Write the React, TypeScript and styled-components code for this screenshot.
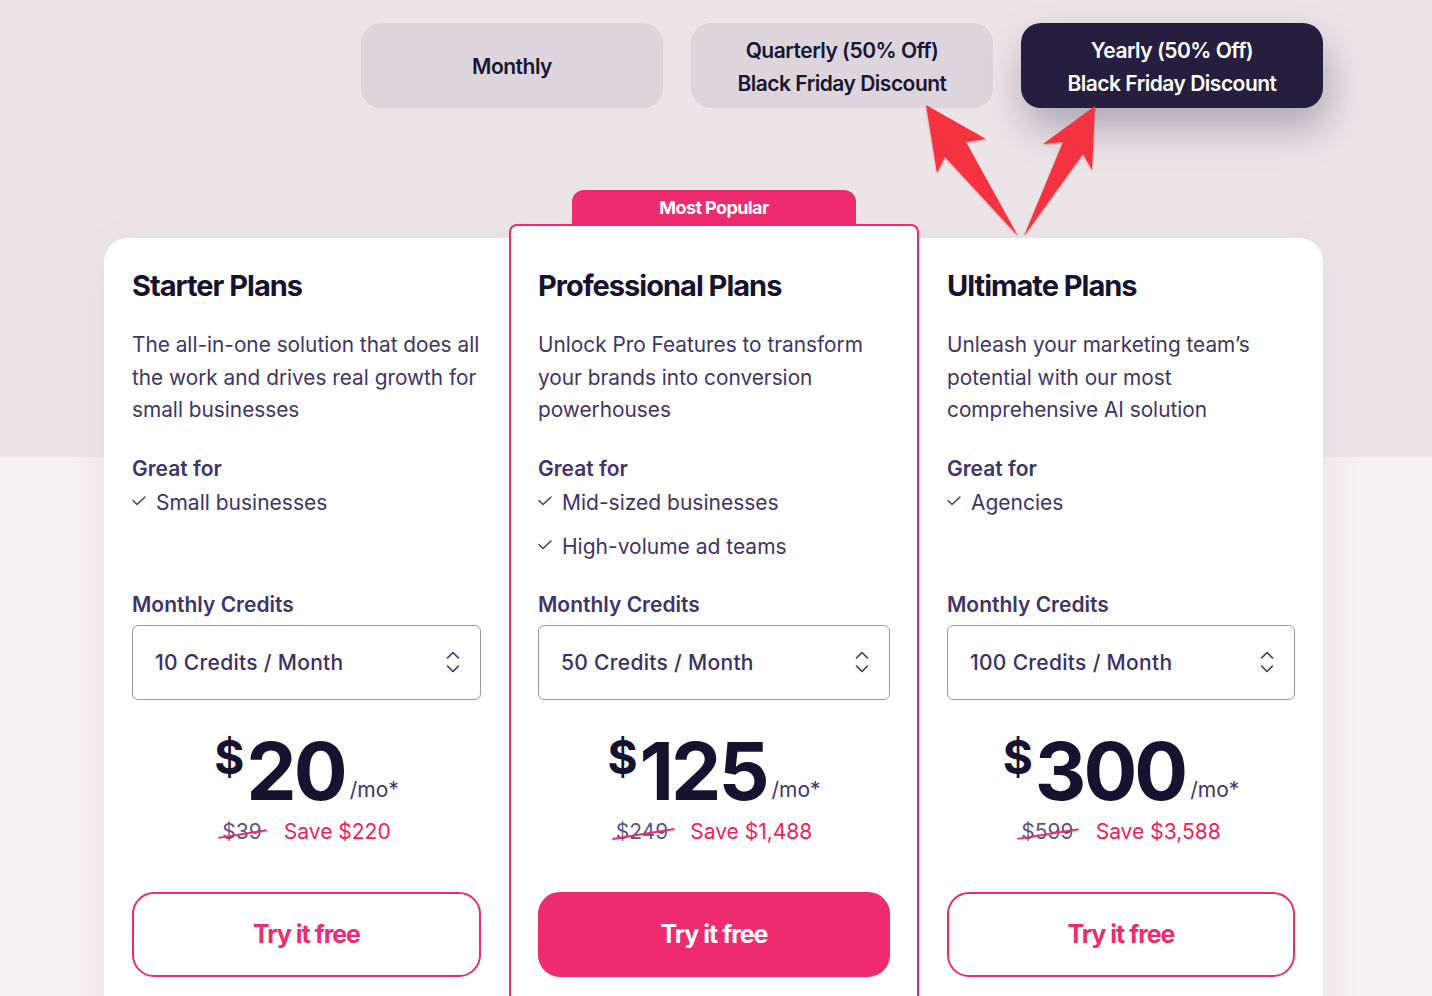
import styled, { createGlobalStyle } from 'styled-components';

const GlobalStyle = createGlobalStyle`
  html, body {
    margin: 0;
    padding: 0;
  }

  body {
    background: linear-gradient(#ece5e8 0, #ece5e8 457px, #f5f0f2 457px, #f5f0f2 100%);
    font-family: Inter, "Noto Sans", sans-serif;
    -webkit-font-smoothing: antialiased;
    overflow: hidden;
  }
`;

type Plan = {
  title: string;
  blurb: string;
  greatFor: string[];
  credits: string;
  price: string;
  was: string;
  save: string;
  popular?: boolean;
};

const plans: Plan[] = [
  {
    title: 'Starter Plans',
    blurb: 'The all-in-one solution that does all the work and drives real growth for small businesses',
    greatFor: ['Small businesses'],
    credits: '10 Credits / Month',
    price: '20',
    was: '$39',
    save: 'Save $220',
  },
  {
    title: 'Professional Plans',
    blurb: 'Unlock Pro Features to transform your brands into conversion powerhouses',
    greatFor: ['Mid-sized businesses', 'High-volume ad teams'],
    credits: '50 Credits / Month',
    price: '125',
    was: '$249',
    save: 'Save $1,488',
    popular: true,
  },
  {
    title: 'Ultimate Plans',
    blurb: 'Unleash your marketing team’s potential with our most comprehensive AI solution',
    greatFor: ['Agencies'],
    credits: '100 Credits / Month',
    price: '300',
    was: '$599',
    save: 'Save $3,588',
  },
];

const CheckIcon = () => (
  <svg width="14" height="10" viewBox="0 0 14 10" fill="none">
    <polyline points="1,4.5 5,8.5 13,1" stroke="#3f3466" strokeWidth="1.4" strokeLinecap="round" strokeLinejoin="round" />
  </svg>
);

const UpDownIcon = () => (
  <svg width="14" height="24" viewBox="0 0 14 24" fill="none">
    <polyline points="1.5,8 7,2.5 12.5,8" stroke="#3f3466" strokeWidth="1.6" strokeLinecap="round" strokeLinejoin="round" />
    <polyline points="1.5,16 7,21.5 12.5,16" stroke="#3f3466" strokeWidth="1.6" strokeLinecap="round" strokeLinejoin="round" />
  </svg>
);

// red callout arrows pointing at the discounted billing options
const Arrows = () => (
  <ArrowLayer width="1432" height="996" viewBox="0 0 1432 996">
    <defs>
      <filter id="arrowShadow" x="-20%" y="-20%" width="140%" height="140%">
        <feDropShadow dx="0" dy="1" stdDeviation="1.2" floodColor="#7a1020" floodOpacity="0.35" />
      </filter>
    </defs>
    <g fill="#f5333f" filter="url(#arrowShadow)">
      <polygon points="926,105 986,139 966,142 1018,236 945,157 937,173" />
      <polygon points="1095,106 1092,170 1083,154 1024,236 1063,142 1043,144" />
    </g>
  </ArrowLayer>
);

const App = () => {
  return (
    <>
      <GlobalStyle />
      <Page>
        <Billing>
          <Period>Monthly</Period>
          <Period>
            Quarterly (50% Off)
            <br />
            Black Friday Discount
          </Period>
          <Period $active>
            Yearly (50% Off)
            <br />
            Black Friday Discount
          </Period>
        </Billing>

        <Board>
          {plans.map((p) => (
            <Column key={p.title} $popular={p.popular}>
              {p.popular && <Ribbon>Most Popular</Ribbon>}
              <Title>{p.title}</Title>
              <Blurb>{p.blurb}</Blurb>
              <Features>
                <Label>Great for</Label>
                <FeatureList>
                  {p.greatFor.map((f) => (
                    <Feature key={f}>
                      <CheckIcon />
                      {f}
                    </Feature>
                  ))}
                </FeatureList>
              </Features>
              <Label>Monthly Credits</Label>
              <Select>
                {p.credits}
                <UpDownIcon />
              </Select>
              <PriceRow>
                <Currency>$</Currency>
                <Amount>{p.price}</Amount>
                <Per>/mo*</Per>
              </PriceRow>
              <SaveRow>
                <Was>{p.was}</Was>
                <Save>{p.save}</Save>
              </SaveRow>
              <TryButton $filled={p.popular}>Try it free</TryButton>
            </Column>
          ))}
        </Board>
      </Page>
      <Arrows />
    </>
  );
};

const Page = styled.div`
  width: 1219px;
  padding: 23px 0 0 104px;
`;

const Billing = styled.div`
  display: flex;
  justify-content: flex-end;
  gap: 28px;
`;

const Period = styled.div<{ $active?: boolean }>`
  width: 302px;
  height: 85px;
  box-sizing: border-box;
  padding-top: 2px;
  border-radius: 20px;
  display: flex;
  align-items: center;
  justify-content: center;
  text-align: center;
  font-size: 21px;
  font-weight: 600;
  letter-spacing: -0.5px;
  line-height: 33px;
  color: ${(p) => (p.$active ? '#ffffff' : '#1a1533')};
  background: ${(p) => (p.$active ? '#251e3f' : '#dcd6dc')};
  box-shadow: ${(p) => (p.$active ? '4px 20px 40px rgba(37, 30, 63, 0.32)' : 'none')};
`;

const Board = styled.div`
  margin-top: 130px;
  display: grid;
  grid-template-columns: 405px 410px 404px;
  background: #ffffff;
  border-radius: 24px 24px 0 0;
  box-shadow: 0 8px 40px rgba(110, 70, 95, 0.07);
  height: 800px;
`;

const Column = styled.div<{ $popular?: boolean }>`
  position: relative;
  display: flex;
  flex-direction: column;
  padding: 30px 28px 0;
  ${(p) =>
    p.$popular &&
    `
    margin-top: -14px;
    padding: 42px 27px 0;
    border: 2px solid #ef2b6f;
    border-bottom: none;
    border-radius: 8px 8px 0 0;
    background: #ffffff;
  `}
`;

const Ribbon = styled.div`
  position: absolute;
  top: -36px;
  left: 50%;
  transform: translateX(-50%);
  width: 284px;
  height: 34px;
  border-radius: 12px 12px 0 0;
  background: #ef2b6f;
  color: #ffffff;
  display: flex;
  align-items: center;
  justify-content: center;
  font-size: 18px;
  font-weight: 700;
  letter-spacing: -0.6px;
`;

const Title = styled.h2`
  margin: 0;
  font-size: 29px;
  line-height: 35px;
  font-weight: 700;
  letter-spacing: -1px;
  color: #16122f;
`;

const Blurb = styled.p`
  margin: 26px 0 0;
  font-size: 20.8px;
  line-height: 32.5px;
  font-weight: 400;
  color: #3f3466;
`;

const Features = styled.div`
  margin-top: 28px;
  height: 136px;
`;

const Label = styled.div`
  font-size: 21px;
  line-height: 28px;
  font-weight: 600;
  color: #40356b;
`;

const FeatureList = styled.div`
  margin-top: 6px;
  display: flex;
  flex-direction: column;
  gap: 16px;
`;

const Feature = styled.div`
  display: flex;
  align-items: center;
  gap: 10px;
  font-size: 21px;
  line-height: 28px;
  color: #3f3466;

  svg {
    flex: none;
    margin-top: -3px;
  }
`;

const Select = styled.div`
  margin-top: 6px;
  height: 75px;
  box-sizing: border-box;
  border: 1px solid #9d93b3;
  border-radius: 6px;
  padding: 0 20px 0 22px;
  display: flex;
  align-items: center;
  justify-content: space-between;
  font-size: 21px;
  font-weight: 500;
  letter-spacing: 0.3px;
  color: #3a2f66;
`;

const PriceRow = styled.div`
  margin-top: 31px;
  display: flex;
  justify-content: center;
  align-items: flex-start;
`;

const Currency = styled.span`
  font-size: 46px;
  line-height: 1;
  font-weight: 700;
  color: #16122f;
  margin: 3px 2px 0 0;
`;

const Amount = styled.span`
  font-size: 80px;
  line-height: 1;
  font-weight: 700;
  letter-spacing: -3px;
  color: #16122f;
`;

const Per = styled.span`
  align-self: flex-end;
  margin: 0 0 11px 5px;
  font-size: 21px;
  line-height: 1;
  color: #3f3466;
`;

const SaveRow = styled.div`
  margin-top: 7px;
  display: flex;
  justify-content: center;
  gap: 22px;
  font-size: 21px;
  line-height: 28px;
`;

const Was = styled.span`
  position: relative;
  color: #5c5283;

  &::after {
    content: '';
    position: absolute;
    left: -4px;
    right: -6px;
    top: 15px;
    height: 2px;
    background: #ef2b6f;
    transform: rotate(-9deg);
  }
`;

const Save = styled.span`
  color: #ef1f5f;
`;

const TryButton = styled.button<{ $filled?: boolean }>`
  margin-top: 46px;
  height: 85px;
  border-radius: 22px;
  border: 2px solid #ef2b6f;
  background: ${(p) => (p.$filled ? '#ef2b6f' : '#ffffff')};
  color: ${(p) => (p.$filled ? '#ffffff' : '#ef2b6f')};
  font-family: Inter, "Noto Sans", sans-serif;
  font-size: 25px;
  font-weight: 700;
  letter-spacing: -1px;
  cursor: pointer;
`;

const ArrowLayer = styled.svg`
  position: absolute;
  top: 0;
  left: 0;
  pointer-events: none;
`;

export default App;
